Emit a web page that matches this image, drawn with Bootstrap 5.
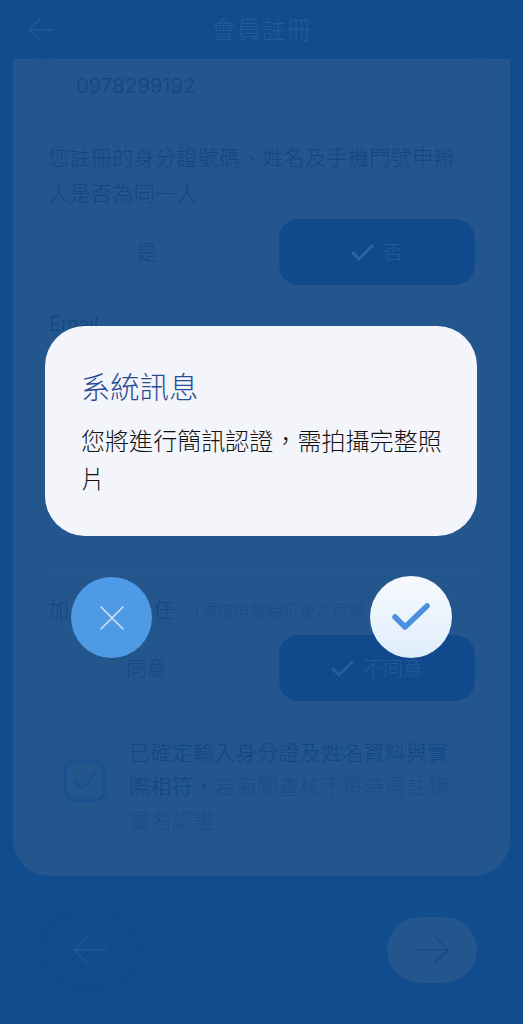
<!DOCTYPE html>
<html lang="zh-Hant">
<head>
<meta charset="utf-8">
<title>會員註冊</title>
<link href="https://cdn.jsdelivr.net/npm/bootstrap@5.3.0/dist/css/bootstrap.min.css" rel="stylesheet">
<style>
html,body{height:1024px;overflow:hidden}
body{background:#114c8e;font-family:"Noto Sans CJK TC","Noto Sans",sans-serif;font-weight:300;color:#14457f;position:relative}
.topbar{height:59px;padding:0 27px 2px;position:relative}
.topbar-title{font-size:24.5px;letter-spacing:.6px;color:#245a96;line-height:57px}
.back-top{position:absolute;left:27px;top:17px}
.sheet{margin:0 13px;height:817px;background:#24568e;border:0;border-radius:0 0 36px 36px;padding:0 35px 0 36px;overflow:hidden}
.phone-box{height:59px;padding:0 27px 6px;background:#24568e;border-radius:0 0 20px 20px;box-shadow:0 3px 8px rgba(32,82,137,.5);font-family:Inter,Roboto,sans-serif;font-weight:300;font-size:20.7px;color:#14457f;line-height:53px}
.ask{font-size:21px;letter-spacing:.42px;line-height:36px;margin:20px 0 9px -1px}
.choice{height:66px;border-radius:20px;font-size:20px;font-weight:300;border:0;display:flex;align-items:center;justify-content:center;gap:9px;padding:0}
.choice-off{background:#24568e;color:#164781;width:195px;box-shadow:0 2px 6px rgba(32,82,137,.35)}
.choice-on{background:#114a8c;color:#245a96;width:196px}
.choice-row{display:flex;justify-content:space-between}
.mail-label{font-size:20px;line-height:24px;margin:27px 0 0;color:#14477f;font-family:Inter,Roboto,sans-serif}
.hidden-gap{height:237px;border-bottom:1px solid #28598f}
.duty{display:flex;align-items:baseline;margin:21px 0 13px -1px;height:28px;line-height:28px;font-size:21px}
.duty-note{font-size:16.5px;margin-left:21px;color:#1c4c85;white-space:nowrap}
.agree{display:flex;align-items:center;margin-top:33px}
.tick-box{width:42px;height:42px;flex:none;margin:0 23px 8px 15px;border:3px solid #1a5090;border-radius:11px;display:flex;align-items:center;justify-content:center}
.agree-text{font-size:21px;letter-spacing:.32px;line-height:34px;color:#124585;padding-right:9px}
.agree-text span{color:#1b4d85}
.pager{display:flex;justify-content:space-between;padding:41px 46px 0 45px}
.pill{width:90px;height:66px;border-radius:33px;border:0;padding:0;display:flex;align-items:center;justify-content:center}
.pill-prev{background:#114c8e;box-shadow:0 0 6px rgba(22,76,138,.5)}
.pill-next{background:#24568e}
.dialog-layer{position:absolute;inset:0;padding:326px 46px 0 45px}
.dialog-box{height:210px;background:#f3f5fb;border:0;border-radius:40px;padding:38px 30px 0 36px}
.dialog-title{font-size:29.3px;line-height:42px;color:#274c94;margin:0 0 15px;font-weight:300}
.dialog-text{font-size:24px;letter-spacing:.05px;line-height:38px;color:#111;margin:0;font-weight:300}
.dialog-actions{display:flex;justify-content:space-between;padding:41px 25px 0 26px}
.round{width:81px;height:81px;padding:0;border:0;border-radius:50%;display:flex;align-items:center;justify-content:center}
.round-no{background:#4f9ae4}
.round-yes{width:82px;height:82px;margin-top:-1px;background:linear-gradient(180deg,#f7fafe,#dfedfb)}
</style>
</head>
<body>
<nav class="navbar topbar justify-content-center">
  <svg class="back-top" width="27" height="26" viewBox="0 0 27 26" fill="none" stroke="#235993" stroke-width="1.4" stroke-linecap="round" stroke-linejoin="round"><path d="M13 2 2 13l11 11M2 13h24"/></svg>
  <span class="topbar-title">會員註冊</span>
</nav>

<main class="card sheet">
  <div class="phone-box">0978299192</div>
  <p class="ask">您註冊的身分證號碼、姓名及手機門號申辦人是否為同一人</p>
  <div class="choice-row">
    <button class="btn choice choice-off" type="button">是</button>
    <button class="btn choice choice-on" type="button">
      <svg width="23" height="17" viewBox="0 0 23 17" fill="none" stroke="#2f659f" stroke-width="3" stroke-linecap="round" stroke-linejoin="round"><path d="M2 9l6 6L21 2"/></svg>否
    </button>
  </div>
  <div class="mail-label">Email</div>
  <div class="hidden-gap"></div>
  <div class="duty"><span>加入會員責任</span><span class="duty-note">(須按申報相符後才可報</span></div>
  <div class="choice-row">
    <button class="btn choice choice-off" type="button">同意</button>
    <button class="btn choice choice-on" type="button">
      <svg width="23" height="17" viewBox="0 0 23 17" fill="none" stroke="#265c98" stroke-width="3" stroke-linecap="round" stroke-linejoin="round"><path d="M2 9l6 6L21 2"/></svg>不同意
    </button>
  </div>
  <div class="agree">
    <div class="tick-box">
      <svg width="24" height="19" viewBox="0 0 24 19" fill="none" stroke="#1a5090" stroke-width="2.4" stroke-linecap="round" stroke-linejoin="round"><path d="M2 10l7 7L22 2"/></svg>
    </div>
    <div class="agree-text">已確定輸入身分證及姓名資料與實際相符，<span>若海關查核不符時得註銷實名認證</span></div>
  </div>
</main>

<div class="pager">
  <button class="btn pill pill-prev" type="button" aria-label="上一步">
    <svg width="36" height="30" viewBox="0 0 36 30" fill="none" stroke="#235993" stroke-width="1.4" stroke-linecap="round" stroke-linejoin="round"><path d="M15 2 2 15l13 13M2 15h32"/></svg>
  </button>
  <button class="btn pill pill-next" type="button" aria-label="下一步">
    <svg width="36" height="30" viewBox="0 0 36 30" fill="none" stroke="#184a85" stroke-width="1.6" stroke-linecap="round" stroke-linejoin="round"><path d="M21 2l13 13-13 13M34 15H2"/></svg>
  </button>
</div>

<div class="dialog-layer">
  <div class="card dialog-box">
    <h5 class="dialog-title">系統訊息</h5>
    <p class="dialog-text">您將進行簡訊認證，需拍攝完整照片</p>
  </div>
  <div class="dialog-actions">
    <button class="btn round round-no" type="button" aria-label="取消">
      <svg width="26" height="26" viewBox="0 0 26 26" fill="none" stroke="#cfe3f8" stroke-width="1.6" stroke-linecap="round"><path d="M2 2l22 22M24 2 2 24"/></svg>
    </button>
    <button class="btn round round-yes" type="button" aria-label="確定">
      <svg width="38" height="28" viewBox="0 0 38 28" fill="none" stroke="#4a90dc" stroke-width="5.5" stroke-linecap="round" stroke-linejoin="round"><path d="M3 14l10 10L35 3"/></svg>
    </button>
  </div>
</div>
</body>
</html>
